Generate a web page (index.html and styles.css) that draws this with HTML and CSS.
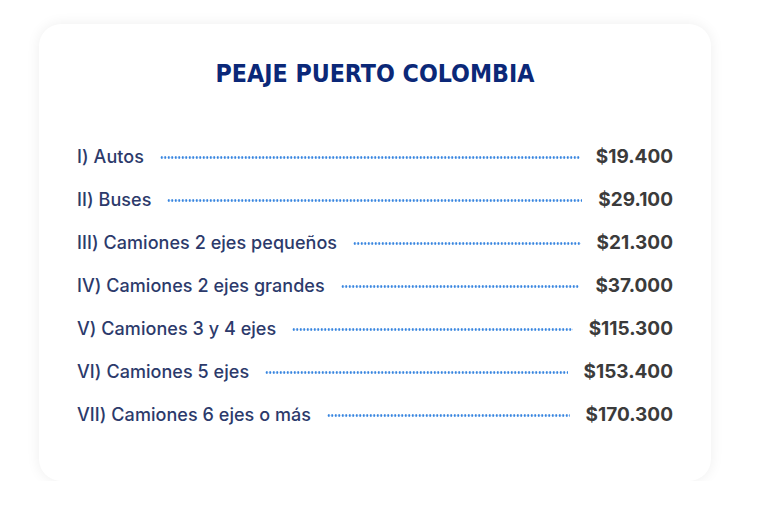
FILE: index.html
```html
<!DOCTYPE html>
<html lang="es">
<head>
<meta charset="utf-8">
<link rel="stylesheet" href="styles.css">
</head>
<body>
<div class="card">
  <h1 class="title">PEAJE PUERTO COLOMBIA</h1>
  <ul class="list">
    <li class="row"><span class="label">I) Autos</span><span class="leader"></span><span class="price">$19.400</span></li>
    <li class="row"><span class="label">II) Buses</span><span class="leader"></span><span class="price">$29.100</span></li>
    <li class="row"><span class="label">III) Camiones 2 ejes pequeños</span><span class="leader"></span><span class="price">$21.300</span></li>
    <li class="row"><span class="label">IV) Camiones 2 ejes grandes</span><span class="leader"></span><span class="price">$37.000</span></li>
    <li class="row"><span class="label">V) Camiones 3 y 4 ejes</span><span class="leader"></span><span class="price">$115.300</span></li>
    <li class="row"><span class="label">VI) Camiones 5 ejes</span><span class="leader"></span><span class="price">$153.400</span></li>
    <li class="row"><span class="label">VII) Camiones 6 ejes o más</span><span class="leader"></span><span class="price">$170.300</span></li>
  </ul>
</div>
</body>
</html>
```
FILE: styles.css
```css
html, body {
  margin: 0;
  padding: 0;
  background: #ffffff;
}
body {
  padding: 24px 0 0 39px;
  font-family: Inter, "Noto Sans", sans-serif;
}
.card {
  width: 672px;
  height: 457px;
  box-sizing: border-box;
  background: #ffffff;
  border-radius: 22px;
  box-shadow: 0 0 14px rgba(0, 0, 0, 0.07);
  padding: 35px 38px 0 38px;
}
.title {
  margin: 0;
  text-align: center;
  font-family: "DejaVu Sans Condensed", "DejaVu Sans", sans-serif;
  font-stretch: condensed;
  font-weight: 700;
  font-size: 24.7px;
  line-height: 30px;
  color: #0b2878;
}
.list {
  list-style: none;
  margin: 55px 0 0 0;
  padding: 0;
  display: flex;
  flex-direction: column;
  gap: 19px;
}
.row {
  display: flex;
  align-items: center;
  height: 24px;
}
.label {
  font-size: 18px;
  font-weight: 450;
  color: #2c3a6b;
  white-space: nowrap;
  letter-spacing: 0.05px;
}
.leader {
  flex: 1;
  height: 3px;
  margin: 3px 16px 0 16px;
  background-image: radial-gradient(circle, #3584df 1px, transparent 1.4px);
  background-size: 3.5px 3px;
  background-repeat: repeat-x;
}
.price {
  font-size: 19px;
  font-weight: 700;
  color: #3b3b3b;
  white-space: nowrap;
}
```
